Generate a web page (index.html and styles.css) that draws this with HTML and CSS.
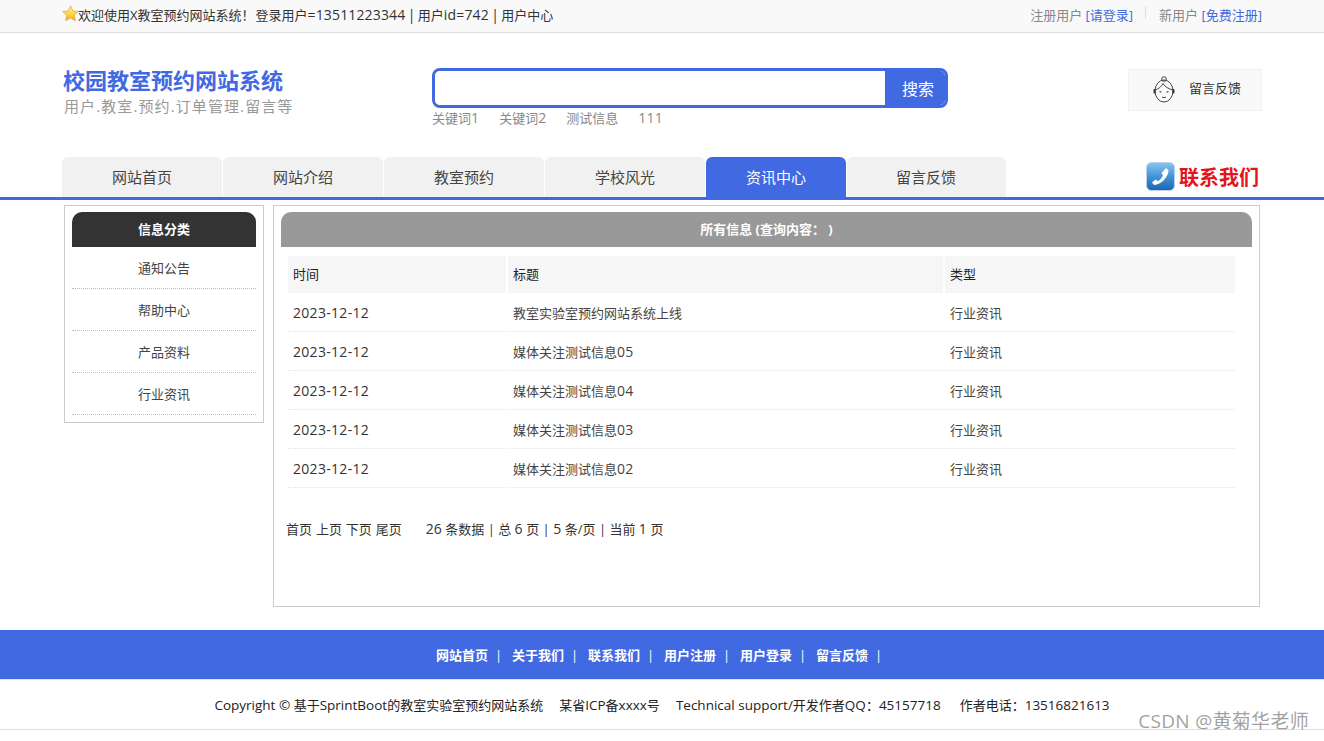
FILE: index.html
```html
<!DOCTYPE html>
<html lang="zh">
<head>
<meta charset="utf-8">
<title>校园教室预约网站系统</title>
<link rel="stylesheet" href="styles.css">
</head>
<body>
<div class="topbar">
  <div class="wrap topbar-in">
    <div class="welcome">
      <svg class="star" width="17" height="17" viewBox="0 0 17 17"><defs><linearGradient id="sg" x1="0" y1="0" x2="0" y2="1"><stop offset="0" stop-color="#fff09a"/><stop offset=".6" stop-color="#ffd23e"/><stop offset="1" stop-color="#f5a81c"/></linearGradient></defs><path d="M8.500 .8l2.300 5.100 5.500.6-4.100 3.700 1.200 5.500-4.900-2.800-4.900 2.800 1.200-5.500L.7 6.500l5.500-.6z" fill="url(#sg)" stroke="#d9a441" stroke-width=".7"/></svg>
      <span>欢迎使用X教室预约网站系统！<span class="tight">登录用户<span class="lat">=13511223344 | </span>用户<span class="lat">id=742 | </span>用户中心</span></span>
    </div>
    <div class="toplinks">
      <span class="tl">注册用户 <a>[请登录]</a></span>
      <span class="sep"></span>
      <span class="tl">新用户 <a>[免费注册]</a></span>
    </div>
  </div>
</div>

<div class="wrap header">
  <div class="brand">
    <div class="brand-title">校园教室预约网站系统</div>
    <div class="brand-sub">用户.教室.预约.订单管理.留言等</div>
  </div>
  <div class="search">
    <div class="search-box">
      <div class="search-input"></div>
      <div class="search-btn">搜索</div>
    </div>
    <div class="keywords"><span>关键词<span class="lat">1</span></span><span>关键词<span class="lat">2</span></span><span>测试信息</span><span class="lat">111</span></div>
  </div>
  <div class="feedback">
    <svg class="agent" width="24" height="28" viewBox="0 0 24 28" fill="none" stroke="#444" stroke-width="1"><circle cx="12" cy="3" r="2.300"/><ellipse cx="12" cy="15" rx="9" ry="11"/><path d="M3.200 14C6.500 13 9.500 10.500 11 7.500 13 11 17 13 20.800 14"/><path d="M7.500 15.500l2 .8M16.500 15.500l-2 .8" stroke-width="1.200"/><path d="M10 21c1 .8 3 .8 4 0"/><rect x="1.500" y="13" width="2" height="4.500" rx="1" fill="#333" stroke="none"/><rect x="20.500" y="13" width="2" height="4.500" rx="1" fill="#333" stroke="none"/></svg>
    <span class="fb-text">留言反馈</span>
  </div>
</div>

<div class="navline">
  <div class="wrap nav">
    <a class="tab">网站首页</a>
    <a class="tab">网站介绍</a>
    <a class="tab">教室预约</a>
    <a class="tab">学校风光</a>
    <a class="tab tab-on">资讯中心</a>
    <a class="tab">留言反馈</a>
    <div class="contact">
      <svg width="29" height="30" viewBox="0 0 29 30"><defs><linearGradient id="pg" x1="0" y1="0" x2="0" y2="1"><stop offset="0" stop-color="#8cc4ef"/><stop offset=".55" stop-color="#3b8fd8"/><stop offset="1" stop-color="#1a66b0"/></linearGradient></defs><rect x=".5" y=".5" width="28" height="28" rx="5" fill="url(#pg)" stroke="#b9d3ea"/><path d="M20 6c1 1 2.500 2 2.500 3-.5 6-7 13-13.500 14-1.200 0-2.200-1.500-3-2.500l3.500-3 2.500 1.500c2-1 4-3.500 5-5.500l-1.500-2.500z" fill="#fff"/></svg>
      <span>联系我们</span>
    </div>
  </div>
</div>

<div class="wrap content">
  <aside class="side">
    <div class="side-head">信息分类</div>
    <div class="side-item">通知公告</div>
    <div class="side-item">帮助中心</div>
    <div class="side-item">产品资料</div>
    <div class="side-item">行业资讯</div>
  </aside>
  <main class="panel">
    <div class="panel-head">所有信息 (查询内容：&nbsp;)</div>
    <table class="list">
      <thead><tr><th class="c1">时间</th><th class="c2">标题</th><th class="c3">类型</th></tr></thead>
      <tbody>
        <tr><td class="num">2023-12-12</td><td>教室实验室预约网站系统上线</td><td>行业资讯</td></tr>
        <tr><td class="num">2023-12-12</td><td>媒体关注测试信息<span class="lat">05</span></td><td>行业资讯</td></tr>
        <tr><td class="num">2023-12-12</td><td>媒体关注测试信息<span class="lat">04</span></td><td>行业资讯</td></tr>
        <tr><td class="num">2023-12-12</td><td>媒体关注测试信息<span class="lat">03</span></td><td>行业资讯</td></tr>
        <tr><td class="num">2023-12-12</td><td>媒体关注测试信息<span class="lat">02</span></td><td>行业资讯</td></tr>
      </tbody>
    </table>
    <div class="pager"><span class="pg-links">首页 上页 下页 尾页</span><span><span class="lat">26 </span>条数据 | 总 <span class="lat">6 </span>页 | <span class="lat">5 </span>条/页 | 当前 <span class="lat">1 </span>页</span></div>
  </main>
</div>

<div class="foot-nav">
  <a>网站首页</a><i>|</i><a>关于我们</a><i>|</i><a>联系我们</a><i>|</i><a>用户注册</a><i>|</i><a>用户登录</a><i>|</i><a>留言反馈</a><i>|</i>
</div>
<div class="copyright"><span class="lat">Copyright © </span>基于<span class="lat">SprintBoot</span>的教室实验室预约网站系统<b></b>某省<span class="lat">ICP</span>备<span class="lat">xxxx</span>号<b></b><span class="lat">Technical support/</span>开发作者<span class="lat">QQ</span>：<span class="lat">45157718</span><b class="wide"></b>作者电话：<span class="lat">13516821613</span></div>
<div class="watermark">CSDN @黄菊华老师</div>
</body>
</html>
```
FILE: styles.css
```css
* { box-sizing: border-box; }
html, body { margin: 0; padding: 0; height: 741px; overflow: hidden; }
body { position: relative; background: #fff; color: #333; font-family: "Open Sans", "Noto Sans CJK SC", sans-serif; font-size: 13px; }
.wrap { width: 1200px; margin: 0 auto; }
.lat { font-size: 14px; letter-spacing: .15px; }

.topbar { height: 33px; background: #f9f9f9; border-bottom: 1px solid #ddd; }
.topbar-in { display: flex; justify-content: space-between; height: 32px; }
.welcome { display: flex; align-items: flex-start; line-height: 29px; color: #333; }
.welcome .lat { word-spacing: -1.5px; }
.star { margin-top: 5px; flex: none; margin-right: -1px; }
.tight { margin-left: 1px; }
.toplinks { display: flex; align-items: flex-start; line-height: 30px; color: #888; }
.toplinks a { color: #4169e2; }
.sep { width: 1px; height: 13px; background: #ddd; margin: 6px 13px 0 12px; }

.header { display: flex; height: 124px; position: relative; }
.brand { width: 370px; padding: 32px 0 0 1px; }
.brand-title { font-size: 22px; font-weight: 700; line-height: 30px; color: #4169e2; }
.brand-sub { font-size: 15px; line-height: 20px; letter-spacing: 1.1px; color: #999; padding: 1px 0 0 1px; }
.search { width: 516px; padding-top: 35px; }
.search-box { display: flex; height: 40px; border: 3px solid #4169e2; border-radius: 8px; overflow: hidden; }
.search-input { flex: 1; background: #fff; }
.search-btn { width: 60px; background: #4169e2; color: #fff; font-size: 16px; line-height: 36px; text-align: center; padding-left: 6px; }
.keywords { display: flex; gap: 20px; font-size: 13px; line-height: 20px; color: #888; }
.feedback { margin-left: auto; margin-top: 36px; width: 134px; height: 42px; background: #f9f9f9; border: 1px solid #f0f0f0; display: flex; align-items: center; padding-left: 23px; gap: 13px; color: #333; font-size: 13px; }
.agent { flex: none; }
.fb-text { margin-top: -5px; }

.navline { height: 43px; border-bottom: 3px solid #4169e2; }
.nav { display: flex; gap: 1px; height: 40px; position: relative; }
.tab { width: 160px; height: 40px; background: #f1f1f1; border-radius: 6px 6px 0 0; text-align: center; font-size: 15px; line-height: 41px; color: #444; }
.tab-on { width: 140px; background: #4169e2; color: #fff; }
.tab-on + .tab { width: 159px; padding-right: 1px; }
.contact { margin-left: auto; display: flex; align-items: center; gap: 4px; width: 113px; height: 40px; margin-right: 3px; }
.contact span { font-size: 20px; line-height: 26px; font-weight: 700; color: #e3141c; white-space: nowrap; margin-top: 1px; }

.content { display: flex; align-items: flex-start; padding: 5px 2px 0; height: 430px; gap: 9px; }
.side { width: 200px; height: 218px; border: 1px solid #ccc; padding: 6px 7px 0; flex: none; }
.side-head { height: 35px; background: #333; border-radius: 10px 10px 0 0; color: #fff; font-weight: 700; text-align: center; line-height: 35px; }
.side-item { height: 42px; line-height: 43px; text-align: center; border-bottom: 1px dotted #bbb; color: #444; }
.panel { width: 987px; height: 402px; border: 1px solid #ccc; padding: 6px 7px 0; flex: none; }
.panel-head { height: 35px; background: #999; border-radius: 10px 10px 0 0; color: #fff; font-weight: 700; text-align: center; line-height: 35px; }
.list { width: 949px; margin: 7px 0 0 5px; border-collapse: separate; border-spacing: 2px 2px; table-layout: fixed; }
.list th { height: 37px; background: #f6f6f6; text-align: left; font-weight: 400; padding: 0 5px 3px; color: #222; }
.list td { height: 37px; padding: 0 5px 2px; border-bottom: 1px dotted #e4e4e4; color: #444; }
.list td.num { color: #333; font-size: 14px; letter-spacing: .3px; }
.c1 { width: 218px; }
.c2 { width: 435px; }
.c3 { width: 290px; }
.pager { margin: 29px 0 0 5px; color: #333; line-height: 20px; }
.pager .lat { letter-spacing: 0; }
.pg-links { margin-right: 24px; word-spacing: .5px; }

.foot-nav { height: 50px; background: #4169e2; border-bottom: 1px solid #dde3f5; color: #fff; font-weight: 700; display: flex; justify-content: center; align-items: center; padding-left: 4px; }
.foot-nav i { font-style: normal; font-weight: 400; width: 24px; padding-left: 7px; }
.copyright { height: 50px; border-bottom: 1px solid #ddd; text-align: center; line-height: 50px; color: #222; }
.copyright .lat { font-size: 13.5px; letter-spacing: 0; }
.copyright b { display: inline-block; width: 16px; }
.copyright b.wide { width: 19px; }
.watermark { position: absolute; right: 15px; top: 708px; font-size: 19px; letter-spacing: .3px; line-height: 26px; color: rgba(130,130,130,.75); }
```
